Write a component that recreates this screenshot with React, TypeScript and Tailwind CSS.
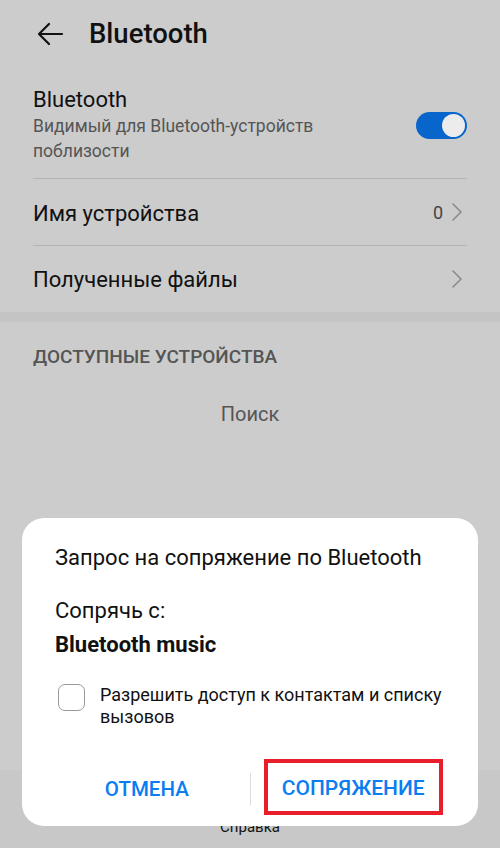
import React from "react";

const Chevron = () => (
  <svg width="12" height="20" viewBox="0 0 12 20" fill="none" className="shrink-0">
    <path d="M2 2l8 8-8 8" stroke="#8a8a8a" strokeWidth="1.6" strokeLinecap="round" strokeLinejoin="round" />
  </svg>
);

const BackArrow = () => (
  <svg width="28" height="24" viewBox="0 0 28 24" fill="none">
    <path d="M26 12H3M13 2L3 12l10 10" stroke="#111" strokeWidth="2.2" strokeLinecap="round" strokeLinejoin="round" />
  </svg>
);

const Toggle = () => (
  <div className="w-[51px] h-[27px] rounded-full bg-[#0865cc] flex items-center justify-end pr-[2px]">
    <div className="w-[23px] h-[23px] rounded-full bg-[#ececec]" />
  </div>
);

export default function App() {
  return (
    <div
      className="relative w-[500px] h-[848px] overflow-hidden bg-[#cccccc] flex flex-col"
      style={{ fontFamily: "Roboto, 'Noto Sans', sans-serif" }}
    >
      {/* toolbar */}
      <div className="h-[67px] flex items-center pl-[36px] gap-[25px] shrink-0">
        <BackArrow />
        <span className="text-[27.5px] font-medium text-[#111] leading-none">Bluetooth</span>
      </div>

      {/* settings list */}
      <div className="px-[33px]">
        <div className="flex items-center justify-between pt-[19px] pb-[14px] border-b border-[#b5b5b5]">
          <div className="flex flex-col">
            <span className="text-[22px] leading-[28px] text-[#111]">Bluetooth</span>
            <span className="text-[17.5px] leading-[25px] text-[#555] w-[330px]">
              Видимый для Bluetooth-устройств поблизости
            </span>
          </div>
          <Toggle />
        </div>
        <div className="h-[67px] flex items-center justify-between border-b border-[#b5b5b5]">
          <span className="text-[22px] text-[#111] translate-y-[1px]">Имя устройства</span>
          <div className="flex items-center gap-[8px] pr-[4px]">
            <span className="text-[18px] text-[#444]">0</span>
            <Chevron />
          </div>
        </div>
        <div className="h-[66px] flex items-center justify-between">
          <span className="text-[22px] text-[#111]">Полученные файлы</span>
          <div className="pr-[4px]">
            <Chevron />
          </div>
        </div>
      </div>

      <div className="h-[10px] bg-[#c4c4c4] shrink-0" />

      <div className="px-[33px] pt-[21px]">
        <span className="text-[19px] font-medium text-[#555]">ДОСТУПНЫЕ УСТРОЙСТВА</span>
      </div>
      <div className="flex justify-center pt-[27px]">
        <span className="text-[20px] text-[#555]">Поиск</span>
      </div>

      <div className="flex-1" />

      {/* bottom bar */}
      <div className="h-[78px] bg-[#c8c8c8] flex items-end justify-center pb-[10px] shrink-0">
        <span className="text-[15px] text-[#111]">Справка</span>
      </div>

      {/* pairing dialog */}
      <div className="absolute left-[22px] top-[518px] w-[456px] h-[308px] bg-white rounded-[22px] flex flex-col px-[33px]">
        <div className="pt-[26px] text-[22px] leading-[28px] text-[#111]">
          Запрос на сопряжение по Bluetooth
        </div>
        <div className="pt-[25px] text-[22px] leading-[28px] text-[#111]">Сопрячь с:</div>
        <div className="pt-[6px] text-[22px] leading-[28px] font-bold text-[#111]">Bluetooth music</div>
        <div className="flex items-start gap-[15px] pt-[25px] pl-[3px]">
          <div className="w-[27px] h-[27px] rounded-[7px] border-[1.5px] border-[#9a9a9a] shrink-0" />
          <span className="text-[18px] leading-[22px] text-[#111]">
            Разрешить доступ к контактам и списку вызовов
          </span>
        </div>
        <div className="flex-1" />
        <div className="flex items-center h-[56px] mb-[11px] -mx-[11px]">
          <div className="flex-1 flex items-center justify-center translate-y-[2px]">
            <span className="text-[20.5px] font-medium text-[#0a7ef0]">ОТМЕНА</span>
          </div>
          <div className="w-px h-[32px] bg-[#dcdcdc] translate-y-[2px]" />
          <div className="flex-1 flex items-center justify-center">
            <div className="w-[179px] h-[56px] border-[4px] border-[#e81f2b] flex items-center justify-center">
              <span className="text-[21px] font-medium text-[#0a7ef0] translate-y-[2px]">СОПРЯЖЕНИЕ</span>
            </div>
          </div>
        </div>
      </div>
    </div>
  );
}
